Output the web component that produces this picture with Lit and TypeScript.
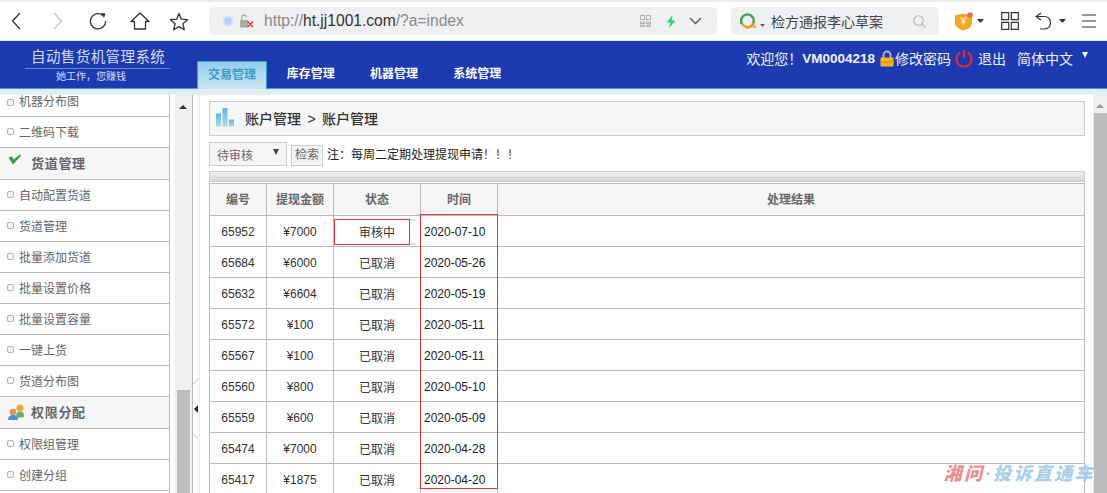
import { LitElement, html, css, svg } from "lit";
import { customElement } from "lit/decorators.js";

const rows = [
  ["65952", "¥7000", "审核中", "2020-07-10"],
  ["65684", "¥6000", "已取消", "2020-05-26"],
  ["65632", "¥6604", "已取消", "2020-05-19"],
  ["65572", "¥100", "已取消", "2020-05-11"],
  ["65567", "¥100", "已取消", "2020-05-11"],
  ["65560", "¥800", "已取消", "2020-05-10"],
  ["65559", "¥600", "已取消", "2020-05-09"],
  ["65474", "¥7000", "已取消", "2020-04-28"],
  ["65417", "¥1875", "已取消", "2020-04-20"],
];

const side: [string, string?][] = [
  ["机器分布图"], ["二维码下载"], ["货道管理", "check"], ["自动配置货道"], ["货道管理"],
  ["批量添加货道"], ["批量设置价格"], ["批量设置容量"], ["一键上货"], ["货道分布图"],
  ["权限分配", "users"], ["权限组管理"], ["创建分组"],
];

const ic = (w: number, h: number, body: unknown) =>
  html`<svg width=${w} height=${h} viewBox="0 0 ${w} ${h}" fill="none">${body}</svg>`;

@customElement("app-root")
export class AppRoot extends LitElement {
  static styles = css`
    :host { display: block; width: 1107px; height: 493px; overflow: hidden; position: relative; background: #fff;
      font-family: "Liberation Sans", "Noto Sans CJK SC", sans-serif; font-size: 12px; color: #333; }
    svg { display: block; flex: none; }

    .chrome { height: 41px; box-sizing: border-box; border-top: 2px solid #e9ebf2; border-bottom: 1px solid #e8e8e8; display: flex; align-items: center; padding-left: 11px; background: #fff; }
    .navs { display: flex; align-items: center; width: 198px; }
    .nav-back { margin-right: 32px; }
    .nav-fwd { margin-right: 26px; }
    .nav-reload { margin-right: 23px; }
    .nav-home { margin-right: 19px; }
    .addr { width: 508px; height: 28px; background: #eff0f2; border-radius: 5px; display: flex; align-items: center; padding: 0 15px 0 13px; box-sizing: border-box; gap: 5px; margin-right: 14px; }
    .url { font-size: 15.6px; color: #8a8a8a; flex: 1; margin-left: 5px; font-family: "Liberation Sans", sans-serif; }
    .url b { font-weight: 400; color: #333; }
    .search { width: 208px; height: 28px; background: #eff0f2; border-radius: 5px; display: flex; align-items: center; padding: 0 13px 0 9px; box-sizing: border-box; margin-right: 15px; }
    .search span { flex: 1; font-size: 14px; color: #444; margin-left: 6px; }
    .caret { margin-left: 4px; margin-top: 8px; }
    .tools { display: flex; align-items: center; }

    .header { height: 48px; box-sizing: border-box; background: #1e3ab0; border-bottom: 1px solid #3ca3cf; display: flex; position: relative; color: #fff; }
    .brand { width: 197px; box-sizing: border-box; padding: 6px 0 0 25px; }
    .brand-title { font-size: 14.5px; letter-spacing: 0.42px; color: #d5dcf2; line-height: 20px; padding-left: 6px; white-space: nowrap; }
    .brand-line { width: 145px; height: 1px; background: #6f82cf; margin-top: 1px; }
    .brand-sub { font-size: 10px; color: #d5dcf2; line-height: 12px; margin: 2px 0 0 31px; }
    .tabs { display: flex; align-items: flex-end; height: 47px; }
    .tab { width: 83.3px; text-align: center; font-size: 12px; font-weight: 700; line-height: 27px; height: 27px; color: #fff; }
    .tab.on { width: 70px; margin-right: 2px; height: 28px; margin-bottom: -1px; box-sizing: border-box; border: 1px solid #3d9fcd; border-bottom: none; background: linear-gradient(#8fcfe9, #d0e6f3); color: #3f9bc7; line-height: 27px; }
    .user { position: absolute; right: 19px; top: 7px; display: flex; align-items: center; height: 20px; font-size: 14px; white-space: nowrap; color: #eef1fb; }
    .user .id { font-weight: 700; font-size: 13.5px; }
    .band { height: 6px; background: linear-gradient(#dfeaf0, #e9f0f3); }

    .body { display: flex; height: 398px; overflow: hidden; }
    .side { width: 170px; box-sizing: border-box; border-right: 1px solid #bbb; flex: none; }
    .row { height: 31px; box-sizing: border-box; border-bottom: 1px solid #bbb; display: flex; align-items: center; padding: 0 0 2px 7px; color: #666; gap: 5px; font-size: 12px; }
    .row:first-child { height: 22px; align-items: flex-end; padding-bottom: 7px; }
    .row:first-child i { margin-bottom: 3px; }
    .row i { width: 5px; height: 5px; border: 1px solid #b5b5b5; border-radius: 2px; background: #f5f5f5; flex: none; }
    .row.cat { height: 32px; background: #f6f6f6; font-weight: 700; letter-spacing: .7px; gap: 0; font-size: 13px; }
    .row.cat span { margin-left: 4px; }
    .vbar { width: 23px; flex: none; box-sizing: border-box; background: #f0f0f0; border-left: 5px solid #fff; border-right: 1px solid #bbb; display: flex; flex-direction: column; }
    .vbar .up { height: 295px; flex: none; position: relative; }
    .vbar .thumb { width: 13px; margin-left: 2px; flex: 1; background: #bdbdbd; }
    .tri { position: absolute; left: 4px; top: 10px; width: 0; height: 0; border: 4px solid transparent; border-top: none; border-bottom: 4px solid #333; }
    .split { width: 6px; flex: none; box-sizing: border-box; position: relative; background: #fdfdfd; }
    .split::after { content: ""; position: absolute; left: 1px; top: 310px; border: 4px solid transparent; border-left: none; border-right: 4px solid #222; }
    .notch { position: absolute; left: 0; top: 284px; }

    .main { flex: 1; box-sizing: border-box; padding: 6px 8px 0 9px; position: relative; border-left: 1px solid #e6e8ee; }
    .title { height: 35px; box-sizing: border-box; background: #f6f6f6; border: 1px solid #ccc; display: flex; align-items: center; padding-left: 5px; gap: 5px; font-size: 14px; font-weight: 500; color: #333; }
    .title span { word-spacing: 2.5px; margin-bottom: 2px; }
    .filters { display: flex; align-items: flex-end; height: 24px; margin: 6px 0 5px; }
    .select { width: 78px; height: 24px; box-sizing: border-box; background: #f5f5f5; border: 1px solid #ccc; padding: 0 7px; display: flex; align-items: center; justify-content: space-between; color: #666; }
    .select::after { content: ""; border: 3.5px solid transparent; border-bottom: none; border-top: 6px solid #444; margin-top: -4px; }
    .btn { width: 32px; height: 21px; box-sizing: border-box; background: #f3f3f3; border: 1px solid #ccc; margin-left: 4px; text-align: center; line-height: 19px; color: #666; }
    .note { margin-left: 4px; line-height: 21px; color: #222; }
    .note em { font-style: normal; color: #8a1a6c; }
    .tbar { height: 11px; box-sizing: border-box; border: 1px solid #ccc; background: linear-gradient(#f0f0f0, #d6d6d6); }
    .wrap { position: relative; margin-top: 1px; }
    table { width: 876px; border-collapse: collapse; table-layout: fixed; }
    th, td { border: 1px solid #bbb; padding: 0; text-align: center; color: #333; font-size: 12px; }
    th { height: 29px; padding-bottom: 2px; background: #f6f6f6; color: #666; font-weight: 700; }
    td { height: 30px; }
    td.num { height: 28px; padding-top: 2px; }
    td.date { height: 28px; text-align: left; padding: 2px 0 0 3px; color: #222; }
    .mark { position: absolute; box-sizing: border-box; border: 1.3px solid #e53935; pointer-events: none; }
    .m1 { left: 125px; top: 36px; width: 76px; height: 26px; }
    .m2 { left: 211px; top: 31px; width: 78px; height: 275px; }
    .rbar { width: 14px; flex: none; background: #f0f0f0; position: relative; }
    .rbar::before { content: ""; position: absolute; left: 3px; top: 9px; border: 4px solid transparent; border-top: none; border-bottom: 4px solid #999; }
    .rbar::after { content: ""; position: absolute; left: 1px; top: 18px; bottom: 0; width: 13px; background: #bdbdbd; }
    .wm { position: absolute; right: 12px; bottom: 8px; font-size: 18px; line-height: 22px; font-weight: 900; font-style: italic; letter-spacing: 2.4px; color: #a9d0e8; white-space: nowrap; }
    .wm b { color: #ee8e91; font-weight: 900; }
  `;

  private chrome() {
    return html`<div class="chrome">
      <div class="navs">
        <div class="nav-back">${ic(10, 18, svg`<path d="M9 1L1.5 9L9 17" stroke="#333" stroke-width="1.3"/>`)}</div>
        <div class="nav-fwd">${ic(10, 18, svg`<path d="M1 1L8.5 9L1 17" stroke="#c8c8c8" stroke-width="1.3"/>`)}</div>
        <div class="nav-reload">${ic(18, 18, svg`<path d="M13.5 3.2A7.6 7.6 0 1 0 16.6 9" stroke="#333" stroke-width="1.3"/><path d="M11.5 1L16.5 1.5L15 6Z" fill="#333"/>`)}</div>
        <div class="nav-home">${ic(20, 18, svg`<path d="M1 9.5L10 1L19 9.5H15.5V17H4.5V9.5Z" stroke="#333" stroke-width="1.3" stroke-linejoin="round"/>`)}</div>
        ${ic(20, 19, svg`<path d="M10 1.5L12.4 7.2L18.6 7.7L13.9 11.7L15.3 17.8L10 14.6L4.7 17.8L6.1 11.7L1.4 7.7L7.6 7.2Z" stroke="#333" stroke-width="1.3" stroke-linejoin="round"/>`)}
      </div>
      <div class="addr">
        ${ic(12, 12, svg`<circle cx="6" cy="6" r="5.5" fill="#d6e4fb"/><circle cx="6" cy="6" r="3.6" fill="#b4cffa"/>`)}
        ${ic(15, 14, svg`<rect x="1" y="6" width="8" height="7.5" fill="#aaa"/><path d="M2.8 6V3.5A2.3 2.3 0 0 1 7.4 3.5" stroke="#aaa" stroke-width="1.3"/><path d="M8.5 7.5L14 13M14 7.5L8.5 13" stroke="#e03131" stroke-width="1.3"/>`)}
        <span class="url">http://<b>ht.jj1001.com</b>/?a=index</span>
        ${ic(11, 12, svg`<path d="M.5.5h4v4h-4zM6.5.5h4v4h-4zM.5 7h4v1.5h-4zM.5 10h4v1.5h-4zM6.5 7h4v1.5h-4zM6.5 10h4v1.5h-4z" stroke="#aaa" stroke-width=".9"/>`)}
        <div style="width:5px"></div>
        ${ic(10, 13, svg`<path d="M6.5 0L0.5 7.5H4.2L3 13L9.5 5.5H5.8Z" fill="#2fd27c"/>`)}
        <div style="width:3px"></div>
        ${ic(13, 8, svg`<path d="M1 1L6.5 6.5L12 1" stroke="#555" stroke-width="1.3"/>`)}
      </div>
      <div class="search">
        ${ic(16, 16, svg`<path d="M13 12.6A6.4 6.4 0 1 1 14.4 8" stroke="#36a45a" stroke-width="2.4" transform="rotate(110 8 8)"/><path d="M2.5 11A6.4 6.4 0 0 0 14 10" stroke="#f39a2b" stroke-width="2.4"/><rect x="13.8" y="12.8" width="2.2" height="2.2" fill="#f39a2b"/>`)}
        <div class="caret">${ic(5, 3, svg`<path d="M0 0H5L2.5 3Z" fill="#666"/>`)}</div>
        <span>检方通报李心草案</span>
        ${ic(13, 13, svg`<circle cx="5.5" cy="5.5" r="4.8" stroke="#b5b5b5" stroke-width="1.1"/><path d="M9 9L12.5 12.5" stroke="#b5b5b5" stroke-width="1.1"/>`)}
      </div>
      <div class="tools">
        ${ic(20, 19, svg`<path d="M1 3.5L9.5 1.5L18 3.5V11C18 14.5 14 17.5 9.5 18.5C5 17.5 1 14.5 1 11Z" fill="#f5a623"/><text x="9.5" y="13" font-size="10" fill="#fff" text-anchor="middle" font-family="Liberation Sans">¥</text><circle cx="16" cy="3" r="2.8" fill="#ee6a6a"/>`)}
        <div style="width:3px"></div>
        ${ic(7, 4, svg`<path d="M0 0H7L3.5 4Z" fill="#333"/>`)}
        <div style="width:17px"></div>
        ${ic(18, 18, svg`<path d="M.7.7h7v7h-7zM10.3.7h7v7h-7zM.7 10.3h7v7h-7zM10.3 10.3h7v7h-7z" stroke="#333" stroke-width="1.2"/>`)}
        <div style="width:16px"></div>
        ${ic(17, 18, svg`<path d="M6 1L1 4.5L6 8" stroke="#333" stroke-width="1.2"/><path d="M1.5 4.5H9C13.5 4.5 15.5 7.5 15.5 11C15.5 14.5 13 17 9 17H5" stroke="#333" stroke-width="1.2"/>`)}
        <div style="width:7px"></div>
        ${ic(7, 4, svg`<path d="M0 0H7L3.5 4Z" fill="#333"/>`)}
        <div style="width:16px"></div>
        ${ic(14, 14, svg`<path d="M0 1H14M0 7H14M0 13H14" stroke="#333" stroke-width="1.2"/>`)}
      </div>
    </div>`;
  }

  private header() {
    return html`<div class="header">
      <div class="brand">
        <div class="brand-title">自动售货机管理系统</div>
        <div class="brand-line"></div>
        <div class="brand-sub">她工作，您赚钱</div>
      </div>
      <div class="tabs">
        <div class="tab on">交易管理</div><div class="tab">库存管理</div><div class="tab">机器管理</div><div class="tab">系统管理</div>
      </div>
      <div class="user">
        <span>欢迎您！</span><span class="id">VM0004218</span>
        <div style="width:5px"></div>
        ${ic(14, 17, svg`<path d="M3.5 8V5A3.5 3.5 0 0 1 10.5 5V8" stroke="#b9b9b9" stroke-width="1.8"/><rect x=".5" y="7.5" width="13" height="9" rx="1" fill="#f3b71c"/><rect x=".5" y="11" width="13" height="2" fill="#e69a10"/>`)}
        <div style="width:1px"></div>
        <span>修改密码</span>
        <div style="width:4px"></div>
        ${ic(18, 18, svg`<path d="M5 3.8A7.5 7.5 0 1 0 13 3.8" stroke="#e0293a" stroke-width="2.2"/><path d="M9 1V9" stroke="#e0293a" stroke-width="2.4"/>`)}
        <div style="width:5px"></div>
        <span>退出</span>
        <div style="width:11px"></div>
        <span>简体中文</span>
        <div style="width:9px"></div>
        <div style="margin-top:-6px">${ic(6, 6, svg`<path d="M0 0H6L3 6Z" fill="#fff"/>`)}</div>
      </div>
    </div>`;
  }

  private sideRow([t, kind]: [string, string?]) {
    if (!kind) return html`<div class="row"><i></i><span>${t}</span></div>`;
    const g = kind === "check"
      ? ic(20, 18, svg`<path d="M1.5 3.5L5 2.5L6.5 5.5L13 0.5L14 1.5L6 10.5Z" fill="#2e9e3a"/>`)
      : ic(20, 18, svg`<circle cx="13" cy="5" r="3.6" fill="#f0a93c"/><path d="M9 15C9 10.5 10 8.5 13 8.5C16 8.5 17 10.5 17 13V14Z" fill="#66b35a"/><circle cx="6" cy="9" r="3.3" fill="#e4905a"/><path d="M1 17C1 13.5 3 12 6 12C9 12 11 13.5 11 17Z" fill="#4c8fd9"/>`);
    return html`<div class="row cat">${g}<span>${t}</span></div>`;
  }

  render() {
    return html`
      ${this.chrome()}
      ${this.header()}
      <div class="band"></div>
      <div class="body">
        <div class="side">${side.map((r) => this.sideRow(r))}</div>
        <div class="vbar"><div class="up"><div class="tri"></div></div><div class="thumb"></div></div>
        <div class="split">
          <div class="notch">${ic(6, 60, svg`<path d="M5.5 0L0 5M0 55L5.5 60" stroke="#bbb"/>`)}</div>
        </div>
        <div class="main">
          <div class="title">
            ${ic(25, 22, svg`<defs><linearGradient id="bb" x1="0" y1="0" x2="0" y2="1"><stop offset="0" stop-color="#5fb3e4"/><stop offset="1" stop-color="#a8daf3"/></linearGradient></defs><rect x="1" y="5.5" width="5" height="13" fill="url(#bb)"/><rect x="7.5" y="0" width="5" height="18.5" fill="url(#bb)"/><rect x="14" y="11.5" width="5" height="7" fill="url(#bb)"/>`)}
            <span>账户管理 &gt; 账户管理</span>
          </div>
          <div class="filters">
            <div class="select">待审核</div>
            <div class="btn">检索</div>
            <div class="note">注：每周二定期处理提现申请<em>！！！</em></div>
          </div>
          <div class="tbar"></div>
          <div class="wrap">
            <table>
              <colgroup><col style="width:57px" /><col style="width:67px" /><col style="width:87px" /><col style="width:77px" /><col /></colgroup>
              <thead><tr><th>编号</th><th>提现金额</th><th>状态</th><th>时间</th><th>处理结果</th></tr></thead>
              <tbody>
                ${rows.map((r) => html`<tr><td class="num">${r[0]}</td><td class="num">${r[1]}</td><td>${r[2]}</td><td class="date">${r[3]}</td><td></td></tr>`)}
              </tbody>
            </table>
            <div class="mark m1"></div>
            <div class="mark m2"></div>
          </div>
        </div>
        <div class="rbar"></div>
      </div>
      <div class="wm"><b>湘问</b>·投诉直通车</div>
    `;
  }
}
